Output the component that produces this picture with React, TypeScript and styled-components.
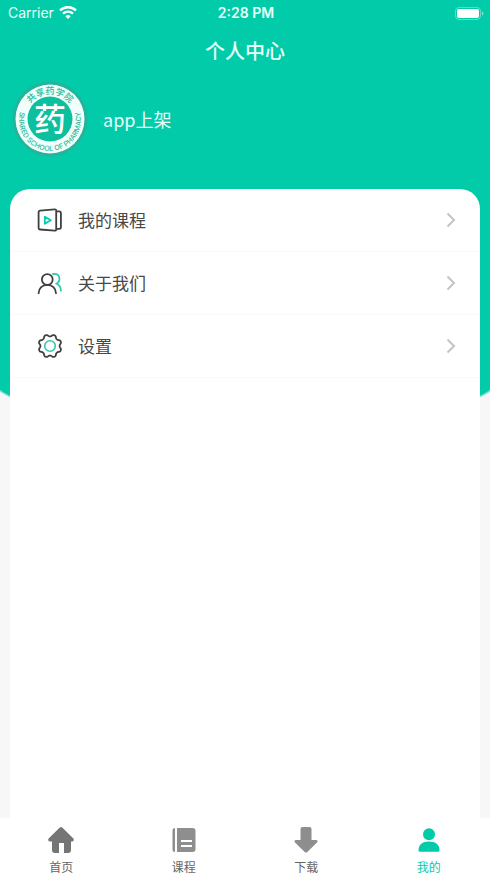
import React from "react";
import styled, { createGlobalStyle } from "styled-components";

const GREEN = "#02cba9";
const SANS = '"Inter", "Noto Sans CJK SC", sans-serif';
const CJK = '"Noto Sans CJK SC", "Noto Sans", sans-serif';

const GlobalStyle = createGlobalStyle`
  *, *::before, *::after { box-sizing: border-box; }
  body { margin: 0; font-family: ${CJK}; background: #f7f7f7; }
  svg { display: block; }
`;

const Page = styled.div`
  min-height: 100vh;
  display: flex;
  flex-direction: column;
  background-color: #f7f7f7;
  background-image:
    linear-gradient(${GREEN}, ${GREEN}),
    radial-gradient(53% 56px at 50% 0, ${GREEN} 98%, transparent 100%);
  background-position: 0 0, 0 374px;
  background-size: 100% 374px, 100% 60px;
  background-repeat: no-repeat;
`;

const StatusBar = styled.div`
  display: grid;
  grid-template-columns: 1fr auto 1fr;
  align-items: center;
  height: 26px;
  padding: 0 6px 0 8px;
  color: #e9fffa;
  font: 400 14px/16px ${SANS};
`;

const Carrier = styled.div`
  display: flex;
  align-items: center;
  gap: 5px;
`;

const Clock = styled.time`
  font-weight: 600;
`;

const Battery = styled.div`
  justify-self: end;
`;

const Title = styled.h1`
  margin: 0;
  padding: 10px 0 8px;
  color: #e9fffa;
  text-align: center;
  font-size: 20px;
  font-weight: 500;
  line-height: 30px;
`;

const Profile = styled.section`
  display: flex;
  align-items: center;
  gap: 15px;
  padding: 7px 12px 32px;
`;

const UserName = styled.span`
  color: #e9fffa;
  font-size: 18px;
  line-height: 26px;
`;

const Card = styled.main`
  flex: 1;
  margin: 0 10px;
  background: #fff;
  border-radius: 20px 20px 0 0;
`;

const Menu = styled.ul`
  margin: 0;
  padding: 0;
  list-style: none;
`;

const MenuLink = styled.a`
  display: flex;
  align-items: center;
  gap: 15px;
  height: 63px;
  padding: 0 23px 0 27px;
  border-bottom: 1px solid #fafafa;
  color: #484848;
  font-size: 17px;
  line-height: 24px;
  text-decoration: none;
`;

const MenuText = styled.span`
  flex: 1;
`;

const TabBar = styled.nav`
  display: grid;
  grid-template-columns: repeat(4, 1fr);
  height: 58px;
  background: #fff;
`;

const Tab = styled.a<{ $active?: boolean }>`
  display: flex;
  flex-direction: column;
  align-items: center;
  gap: 4px;
  padding-top: 8px;
  color: ${(p) => (p.$active ? GREEN : "#666")};
  font-size: 12px;
  line-height: 18px;
  text-decoration: none;
`;

const Wifi = () => (
  <svg width="18" height="14" viewBox="0 0 18 14" fill="none" stroke="#fff" aria-hidden="true">
    <path d="M1 4.4a11.5 11.5 0 0 1 16 0" strokeWidth="2.6" />
    <path d="M4 7.7a7.2 7.2 0 0 1 10 0" strokeWidth="2.3" />
    <path d="M9 13 6.3 10.2a3.9 3.9 0 0 1 5.4 0Z" fill="#fff" stroke="none" />
  </svg>
);

const BatteryIcon = () => (
  <svg width="29" height="13" viewBox="0 0 29 13" aria-hidden="true">
    <rect x=".5" y=".5" width="25" height="12" rx="3.5" fill="none" stroke="#5eddc6" />
    <rect x="2" y="2" width="22" height="9" rx="2" fill="#fff" />
    <path d="M27 4.5c1.8.5 1.8 3.5 0 4Z" fill="#8be6d5" />
  </svg>
);

const Logo = () => (
  <svg width="76" height="76" viewBox="0 0 76 76" role="img" aria-label="共享药学院">
    <defs>
      <path id="arcTop" d="M13 38a25 25 0 0 1 50 0" />
      <path id="arcBottom" d="M10.3 25A31 31 0 1 0 65.7 25" />
    </defs>
    <circle cx="38" cy="38" r="37.5" fill="#26b39b" />
    <circle cx="38" cy="38" r="34.5" fill="#f0fffb" />
    <circle cx="38" cy="38" r="22.5" fill="#0cbf9e" />
    <text fill="#2bb798" fontSize="9" fontWeight="500" fontFamily={CJK} textAnchor="middle">
      <textPath href="#arcTop" startOffset="50%">共享药学院</textPath>
    </text>
    <text fill="#2bb798" fontSize="7" fontWeight="500" fontFamily={SANS} textAnchor="middle">
      <textPath href="#arcBottom" startOffset="50%">SHARED SCHOOL OF PHARMACY</textPath>
    </text>
    <text x="38" y="50" fill="#fff" fontSize="32" fontWeight="500" fontFamily={CJK} textAnchor="middle">药</text>
  </svg>
);

const CourseIcon = () => (
  <svg width="26" height="26" viewBox="0 0 26 26" fill="none" strokeWidth="1.8" strokeLinejoin="round" aria-hidden="true">
    <path d="M2.9 3.6 17.8 2.4q1.4-.1 1.4 1.3v18.7q0 1.4-1.4 1.3L2.9 22.5q-1.3-.1-1.3-1.4V4.9q0-1.2 1.3-1.3ZM19.2 4.4h3q1.7 0 1.7 1.6v14.3q0 1.6-1.7 1.6h-3" stroke="#404040" />
    <path d="M7.8 9.8v7l6-3.5Z" stroke={GREEN} />
  </svg>
);

const PeopleIcon = () => (
  <svg width="26" height="26" viewBox="0 0 26 26" fill="none" strokeWidth="1.8" strokeLinecap="round" aria-hidden="true">
    <path d="M16 4c7-1.2 8.4 6.6 3.6 9.7 2.7 1.2 4.3 4 4.3 7" stroke="#30c9ad" />
    <circle cx="10.3" cy="9.5" r="5.4" stroke="#404040" />
    <path d="M1.6 23.2c.2-4.9 3.7-8.3 8.7-8.3s8.5 3.4 8.7 8.3" stroke="#404040" />
  </svg>
);

const gearOutline = Array.from({ length: 128 }, (_, i) => {
  const angle = (i / 128) * Math.PI * 2;
  const radius = 10.6 - Math.tanh(1.4 * Math.cos(8 * angle)) * 1.1;
  const x = 13 + radius * Math.cos(angle);
  const y = 13 + radius * Math.sin(angle);
  return `${x.toFixed(2)},${y.toFixed(2)}`;
}).join(" ");

const GearIcon = () => (
  <svg width="26" height="26" viewBox="0 0 26 26" fill="none" strokeLinejoin="round" aria-hidden="true">
    <polygon points={gearOutline} stroke="#404040" strokeWidth="1.8" />
    <circle cx="13" cy="13" r="5.3" stroke="#30c9ad" strokeWidth="1.6" />
  </svg>
);

const Chevron = () => (
  <svg width="12" height="16" viewBox="0 0 12 16" fill="none" stroke="#c4c4c4" strokeWidth="2" aria-hidden="true">
    <path d="m2.5 1.5 6.5 6.5-6.5 6.5" />
  </svg>
);

const HomeIcon = () => (
  <svg width="28" height="28" viewBox="0 0 28 28" aria-hidden="true">
    <path d="M12.8 1.4q1.2-1 2.4 0L26.4 12.6q1.2 2.2-1 2.9H24V24q0 3-3 3h-4V17h-5v10H8q-3 0-3-3v-8.5H2.6q-2.2-.7-1-2.9Z" fill="#757575" />
  </svg>
);

const BookIcon = () => (
  <svg width="28" height="28" viewBox="0 0 28 28" aria-hidden="true">
    <path d="M5 2v24q-2.5 0-2.5-2.5v-19Q2.5 2 5 2ZM7 2h15.5Q25.5 2 25.5 5v18q0 3-3 3H7Z" fill="#8e8e8e" />
    <path d="M11 15h11M11 20h11" stroke="#fff" strokeWidth="1.8" />
  </svg>
);

const DownloadIcon = () => (
  <svg width="28" height="28" viewBox="0 0 28 28" aria-hidden="true">
    <path d="M10.5 1h7q2 0 2 2v11H24q2.5.5 1 2.6L15.3 26q-1.3 1-2.6 0L3 16.6Q1.5 14.5 4 14h4.5V3q0-2 2-2Z" fill="#8e8e8e" />
  </svg>
);

const MeIcon = () => (
  <svg width="28" height="28" viewBox="0 0 28 28" fill={GREEN} aria-hidden="true">
    <circle cx="14" cy="8.3" r="6" />
    <path d="M3.5 24.5C3.5 18.5 7.5 15.5 14 15.5S24.5 18.5 24.5 24.5Q24.5 25.8 23 25.8H5Q3.5 25.8 3.5 24.5Z" />
  </svg>
);

const menu = [
  { label: "我的课程", Icon: CourseIcon },
  { label: "关于我们", Icon: PeopleIcon },
  { label: "设置", Icon: GearIcon },
];

const tabs = [
  { label: "首页", Icon: HomeIcon },
  { label: "课程", Icon: BookIcon },
  { label: "下载", Icon: DownloadIcon },
  { label: "我的", Icon: MeIcon, active: true },
];

export default function App() {
  return (
    <Page>
      <GlobalStyle />
      <StatusBar>
        <Carrier>Carrier <Wifi /></Carrier>
        <Clock>2:28 PM</Clock>
        <Battery><BatteryIcon /></Battery>
      </StatusBar>
      <Title>个人中心</Title>
      <Profile>
        <Logo />
        <UserName>app上架</UserName>
      </Profile>
      <Card>
        <Menu>
          {menu.map(({ label, Icon }) => (
            <li key={label}>
              <MenuLink href="#">
                <Icon />
                <MenuText>{label}</MenuText>
                <Chevron />
              </MenuLink>
            </li>
          ))}
        </Menu>
      </Card>
      <TabBar>
        {tabs.map(({ label, Icon, active }) => (
          <Tab key={label} href="#" $active={active} aria-current={active ? "page" : undefined}>
            <Icon />
            {label}
          </Tab>
        ))}
      </TabBar>
    </Page>
  );
}
